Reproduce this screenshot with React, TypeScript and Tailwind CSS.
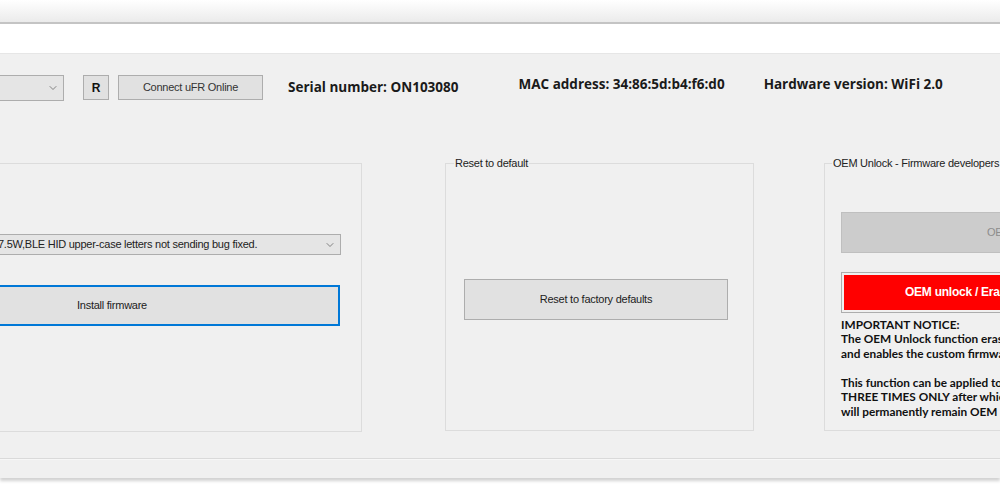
import { ChevronDown } from "lucide-react";

const ui = "font-['Liberation_Sans',Arial,sans-serif] text-[11px] tracking-[-0.25px]";
const bold = "font-['Open_Sans','Noto_Sans',sans-serif] font-bold";

export default function App() {
  return (
    <div className="w-[1000px] h-[500px] overflow-hidden bg-white flex flex-col">
      {/* area behind the window */}
      <div className="h-[22px] shrink-0 bg-gradient-to-b from-white to-[#ebebeb]" />
      <div className="h-[2px] shrink-0 bg-[#c4c4c4]" />
      <div className="h-[29px] shrink-0 bg-white" />

      {/* window body */}
      <div className="h-[425px] shrink-0 bg-[#f0f0f0] border-t border-[#e6e6e6] shadow-[0_3px_3px_rgba(0,0,0,0.18)] flex flex-col">
        {/* device bar */}
        <div className="flex items-center mt-[20px] h-[27px]">
          <div className="-ml-[100px] w-[164px] shrink-0 h-[26px] bg-[#e5e5e5] border border-[#adadad] flex items-center justify-end pr-[4px]">
            <ChevronDown className="w-[12px] h-[12px] text-[#606060]" strokeWidth={1.5} />
          </div>
          <button className={`ml-[19px] w-[26px] shrink-0 h-[25px] bg-[#e1e1e1] border border-[#adadad] font-bold text-[#111] ${ui} text-[12px]`}>
            R
          </button>
          <button className={`ml-[9px] w-[145px] shrink-0 h-[25px] bg-[#e1e1e1] border border-[#adadad] text-[#333] ${ui}`}>
            Connect uFR Online
          </button>
          <span className={`ml-[25px] shrink-0 text-[13.5px] text-[#1a1a1a] ${bold}`}>Serial number: ON103080</span>
          <span className={`ml-[60px] shrink-0 text-[13.5px] text-[#1a1a1a] -mt-[6px] ${bold}`}>MAC address: 34:86:5d:b4:f6:d0</span>
          <span className={`ml-[39px] shrink-0 text-[13.5px] text-[#1a1a1a] -mt-[6px] ${bold}`}>Hardware version: WiFi 2.0</span>
        </div>

        {/* group boxes */}
        <div className="flex items-start mt-[54px] h-[276px]">
          <fieldset className="-ml-[40px] mt-[8px] w-[402px] h-[269px] min-w-0 shrink-0 border border-[#dcdcdc] pt-[70px]">
            <div className={`ml-[35px] w-[345px] h-[21px] bg-[#e5e5e5] border border-[#adadad] flex items-center justify-between pr-[4px] text-[#222] ${ui}`}>
              <span className="whitespace-nowrap ml-[1px]">7.5W,BLE HID upper-case letters not sending bug fixed.</span>
              <ChevronDown className="w-[12px] h-[12px] text-[#606060]" strokeWidth={1.5} />
            </div>
            <button className={`mt-[30px] -ml-[77px] w-[456px] h-[41px] bg-[#e1e1e1] border-2 border-[#0078d7] text-[#222] ${ui}`}>
              Install firmware
            </button>
          </fieldset>

          <fieldset className="ml-[83px] w-[309px] h-[276px] min-w-0 shrink-0 border border-[#dcdcdc] px-[18px] pt-[107px]">
            <legend className={`-ml-[10px] px-[1px] text-[#222] ${ui}`}>Reset to default</legend>
            <button className={`w-[264px] h-[41px] bg-[#e1e1e1] border border-[#adadad] text-[#222] ${ui}`}>
              Reset to factory defaults
            </button>
          </fieldset>

          <fieldset className="ml-[70px] w-[320px] h-[276px] min-w-0 shrink-0 border border-[#dcdcdc] pl-[16px] pt-[40px]">
            <legend className={`-ml-[9px] px-[1px] text-[#222] whitespace-nowrap ${ui}`}>OEM Unlock - Firmware developers</legend>
            <div className={`w-[290px] h-[41px] bg-[#cccccc] border border-[#bfbfbf] flex items-center pl-[145px] text-[#8d8d8d] whitespace-nowrap ${ui}`}>
              OEM lock
            </div>
            <div className="mt-[19px] w-[290px] h-[41px] border border-[#adadad] p-[2px]">
              <div className={`h-full bg-[#ff0000] flex items-center pl-[61px] text-white font-bold whitespace-nowrap ${ui} text-[12px]`}>
                OEM unlock / Erase
              </div>
            </div>
            <div className="mt-[5px] text-[11.8px] leading-[14.6px] text-[#111] font-['Lato',sans-serif] font-bold whitespace-nowrap">
              <div>IMPORTANT NOTICE:</div>
              <div>The OEM Unlock function erases</div>
              <div>and enables the custom firmware</div>
              <div className="h-[14.6px]" />
              <div>This function can be applied to</div>
              <div>THREE TIMES ONLY after which</div>
              <div>will permanently remain OEM</div>
            </div>
          </fieldset>
        </div>

        {/* status separator */}
        <div className="mt-[27px] h-[2px] border-t border-[#dadada] bg-[#f7f7f7]" />
      </div>
    </div>
  );
}
